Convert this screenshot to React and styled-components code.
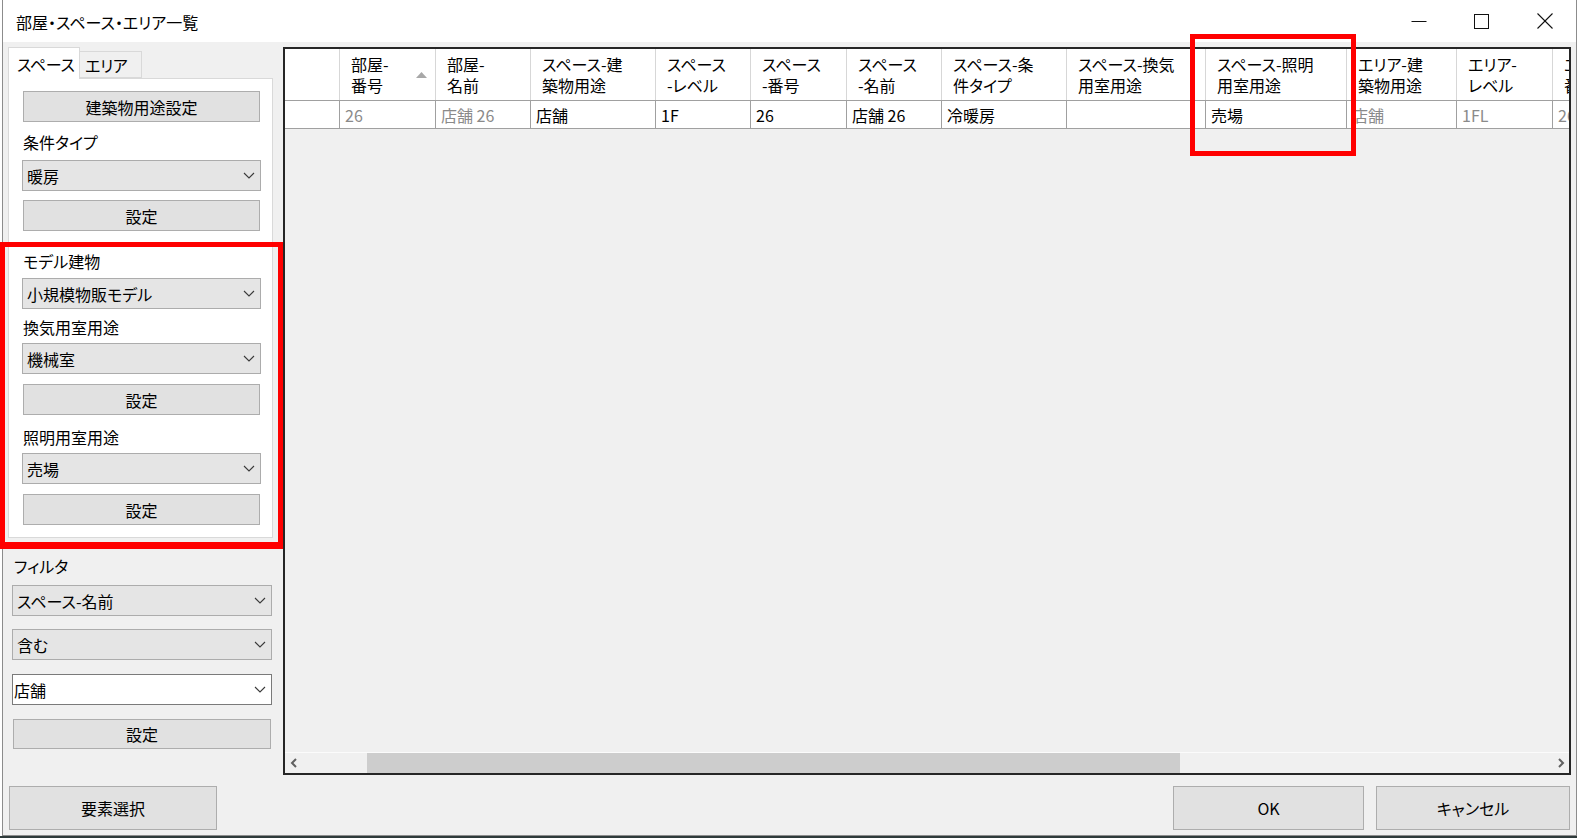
import React from 'react';
import styled, { createGlobalStyle } from 'styled-components';

const GlobalStyle = createGlobalStyle`
  html, body {
    margin: 0;
    padding: 0;
    background: #fff;
  }
  body {
    font-family: "Noto Sans CJK JP", "Noto Sans", sans-serif;
    font-size: 16px;
    color: #000;
    font-feature-settings: "palt";
  }
  * {
    box-sizing: border-box;
  }
`;

const Screen = styled.div`
  position: relative;
  width: 1577px;
  height: 838px;
  overflow: hidden;
  background: #fff;
`;

const Window = styled.div`
  margin-left: 2px;
  width: 1575px;
  height: 836px;
  border: 1px solid #8c8c8c;
  border-top: 0;
  display: flex;
  flex-direction: column;
`;

const Taskbar = styled.div`
  height: 2px;
  background: #2e3a3a;
`;

const TitleBar = styled.div`
  height: 42px;
  flex-shrink: 0;
  background: #fff;
  display: flex;
  align-items: center;
  padding-left: 13px;
`;

const Title = styled.div`
  font-size: 16px;
  padding-top: 2px;
`;

const WinControls = styled.div`
  margin-left: auto;
  display: flex;
  height: 100%;
`;

const WinButton = styled.div`
  width: 63px;
  height: 100%;
  display: flex;
  align-items: center;
  justify-content: center;
`;

const Client = styled.div`
  flex: 1;
  background: #f0f0f0;
  padding: 5px;
  display: flex;
  flex-direction: column;
`;

const Main = styled.div`
  display: flex;
  gap: 10px;
  height: 728px;
  flex-shrink: 0;
`;

const LeftPane = styled.div`
  width: 265px;
  flex-shrink: 0;
  display: flex;
  flex-direction: column;
`;

const TabStrip = styled.div`
  position: relative;
  z-index: 1;
  display: flex;
  align-items: flex-end;
  height: 31px;
`;

const Tab = styled.div`
  width: ${p => p.$w}px;
  height: ${p => (p.$active ? 32 : 27)}px;
  margin-bottom: ${p => (p.$active ? -1 : 0)}px;
  padding-left: ${p => p.$pad}px;
  background: ${p => (p.$active ? '#fff' : '#f0f0f0')};
  border: 1px solid #d9d9d9;
  border-bottom: ${p => (p.$active ? 'none' : '1px solid #d9d9d9')};
  border-left: ${p => (p.$active ? '1px solid #d9d9d9' : 'none')};
  display: flex;
  align-items: center;
  font-size: 16px;
  letter-spacing: -0.3px;
  white-space: nowrap;
`;

const TabPage = styled.div`
  height: 460px;
  background: #fff;
  border: 1px solid #d9d9d9;
  padding: 12px 11px 0 13px;
  display: flex;
  flex-direction: column;
`;

const FilterGroup = styled.div`
  display: flex;
  flex-direction: column;
  padding: 0 1px 0 4px;
`;

const Label = styled.div`
  height: 22px;
  line-height: 22px;
  margin-top: ${p => p.$mt || 0}px;
  padding-left: ${p => p.$indent || 1}px;
  font-size: 16px;
  white-space: nowrap;
`;

const Combo = styled.div`
  height: 31px;
  flex-shrink: 0;
  margin-top: ${p => p.$mt || 0}px;
  background: ${p => (p.$editable ? '#fff' : '#e5e5e5')};
  border: 1px solid ${p => (p.$editable ? '#7a7a7a' : '#acacac')};
  padding: 0 5px 0 ${p => (p.$editable ? 1 : 4)}px;
  display: flex;
  align-items: center;
  font-size: 16px;
  white-space: nowrap;
`;

const ComboText = styled.span`
  flex: 1;
`;

const Button = styled.div`
  height: ${p => p.$h || 31}px;
  flex-shrink: 0;
  width: ${p => (p.$w ? `${p.$w}px` : 'auto')};
  margin: ${p => p.$mt || 0}px ${p => p.$mr ?? 1}px 0 ${p => p.$ml ?? 1}px;
  background: #e1e1e1;
  border: 1px solid #adadad;
  display: flex;
  align-items: center;
  justify-content: center;
  font-size: 16px;
  white-space: nowrap;
`;

const Grid = styled.div`
  width: 1288px;
  height: 728px;
  flex-shrink: 0;
  border: 2px solid #262626;
  background: #f0f0f0;
  display: flex;
  flex-direction: column;
  overflow: hidden;
`;

const HeaderRow = styled.div`
  display: flex;
  height: 52px;
  flex-shrink: 0;
  background: #fff;
  border-bottom: 1px solid #a0a0a0;
`;

const HeaderCell = styled.div`
  width: ${p => p.$w}px;
  flex-shrink: 0;
  border-right: 1px solid #d7d7d7;
  padding-left: 11px;
  display: flex;
  align-items: center;
  line-height: 21px;
  font-size: 16px;
  white-space: nowrap;
`;

const SortMark = styled.svg`
  margin-left: auto;
  margin-right: 8px;
`;

const DataRow = styled.div`
  display: flex;
  height: 28px;
  flex-shrink: 0;
`;

const DataCell = styled.div`
  width: ${p => p.$w}px;
  flex-shrink: 0;
  background: #fff;
  border-right: 1px solid #a0a0a0;
  border-bottom: 1px solid #a0a0a0;
  padding-left: 5px;
  display: flex;
  align-items: center;
  font-size: 16px;
  color: ${p => (p.$dim ? '#8a8a8a' : '#000')};
  white-space: nowrap;
`;

const EmptyArea = styled.div`
  flex: 1;
`;

const ScrollBar = styled.div`
  height: 21px;
  flex-shrink: 0;
  display: flex;
  background: #f0f0f0;
  border-top: 1px solid #fbfbfb;
`;

const ScrollArrow = styled.div`
  width: 17px;
  flex-shrink: 0;
  display: flex;
  align-items: center;
  justify-content: center;
`;

const ScrollTrack = styled.div`
  flex: 1;
  display: flex;
`;

const ScrollThumb = styled.div`
  margin-left: ${p => p.$offset}px;
  width: ${p => p.$size}px;
  background: #cdcdcd;
`;

const BottomBar = styled.div`
  display: flex;
  height: 44px;
  margin-top: 11px;
  flex-shrink: 0;
`;

const Callout = styled.div`
  position: absolute;
  left: ${p => p.$x}px;
  top: ${p => p.$y}px;
  width: ${p => p.$w}px;
  height: ${p => p.$h}px;
  border: 5px solid #ff0000;
  border-bottom-width: ${p => p.$bottom || 5}px;
  pointer-events: none;
`;

const Chevron = () => (
  <svg width="12" height="7" viewBox="0 0 12 7">
    <polyline points="1,1 6,6 11,1" fill="none" stroke="#3a3a3a" strokeWidth="1.1" />
  </svg>
);

const Arrow = ({ dir }) => (
  <svg width="8" height="10" viewBox="0 0 8 10">
    <polyline
      points={dir === 'left' ? '6,1 2,5 6,9' : '2,1 6,5 2,9'}
      fill="none"
      stroke="#606060"
      strokeWidth="2"
    />
  </svg>
);

const Select = ({ value, mt, editable }) => (
  <Combo $mt={mt} $editable={editable}>
    <ComboText>{value}</ComboText>
    <Chevron />
  </Combo>
);

const columns = [
  { w: 96, head: ['部屋-', '番号'], value: '26', dim: true, sorted: true },
  { w: 95, head: ['部屋-', '名前'], value: '店舗 26', dim: true },
  { w: 125, head: ['スペース-建', '築物用途'], value: '店舗' },
  { w: 95, head: ['スペース', '-レベル'], value: '1F' },
  { w: 96, head: ['スペース', '-番号'], value: '26' },
  { w: 95, head: ['スペース', '-名前'], value: '店舗 26' },
  { w: 125, head: ['スペース-条', '件タイプ'], value: '冷暖房' },
  { w: 139, head: ['スペース-換気', '用室用途'], value: '' },
  { w: 141, head: ['スペース-照明', '用室用途'], value: '売場' },
  { w: 110, head: ['エリア-建', '築物用途'], value: '店舗', dim: true },
  { w: 96, head: ['エリア-', 'レベル'], value: '1FL', dim: true },
  { w: 96, head: ['エリア-', '番号'], value: '26', dim: true },
];

export default function App() {
  return (
    <Screen>
      <GlobalStyle />
      <Window>
        <TitleBar>
          <Title>部屋・スペース・エリア一覧</Title>
          <WinControls>
            <WinButton>
              <svg width="16" height="16" viewBox="0 0 16 16">
                <line x1="0.5" y1="8.5" x2="15.5" y2="8.5" stroke="#111" strokeWidth="1" />
              </svg>
            </WinButton>
            <WinButton>
              <svg width="15" height="15" viewBox="0 0 15 15">
                <rect x="0.5" y="0.5" width="14" height="14" fill="none" stroke="#111" strokeWidth="1" />
              </svg>
            </WinButton>
            <WinButton>
              <svg width="16" height="16" viewBox="0 0 16 16">
                <line x1="0.5" y1="0.5" x2="15.5" y2="15.5" stroke="#111" strokeWidth="1.1" />
                <line x1="15.5" y1="0.5" x2="0.5" y2="15.5" stroke="#111" strokeWidth="1.1" />
              </svg>
            </WinButton>
          </WinControls>
        </TitleBar>

        <Client>
          <Main>
            <LeftPane>
              <TabStrip>
                <Tab $active $w={72} $pad={8}>スペース</Tab>
                <Tab $w={62} $pad={5}>エリア</Tab>
              </TabStrip>
              <TabPage>
                <Button>建築物用途設定</Button>
                <Label $mt={9}>条件タイプ</Label>
                <Select mt={7} value="暖房" />
                <Button $mt={9}>設定</Button>

                <Label $mt={19}>モデル建物</Label>
                <Select mt={6} value="小規模物販モデル" />
                <Label $mt={7}>換気用室用途</Label>
                <Select mt={5} value="機械室" />
                <Button $mt={10}>設定</Button>
                <Label $mt={11}>照明用室用途</Label>
                <Select mt={5} value="売場" />
                <Button $mt={10}>設定</Button>
              </TabPage>

              <FilterGroup>
                <Label $mt={17} $indent={2}>フィルタ</Label>
                <Select mt={8} value="スペース-名前" />
                <Select mt={13} value="含む" />
                <Select mt={14} value="店舗" editable />
                <Button $mt={14} $h={30}>設定</Button>
              </FilterGroup>
            </LeftPane>

            <Grid>
              <HeaderRow>
                <HeaderCell $w={55} />
                {columns.map(col => (
                  <HeaderCell key={col.head.join('')} $w={col.w}>
                    <div>
                      {col.head[0]}
                      <br />
                      {col.head[1]}
                    </div>
                    {col.sorted && (
                      <SortMark width="11" height="6" viewBox="0 0 11 6">
                        <polygon points="0,6 5.5,0 11,6" fill="#a8a8a8" />
                      </SortMark>
                    )}
                  </HeaderCell>
                ))}
              </HeaderRow>
              <DataRow>
                <DataCell $w={55} />
                {columns.map(col => (
                  <DataCell key={col.head.join('')} $w={col.w} $dim={col.dim}>
                    {col.value}
                  </DataCell>
                ))}
              </DataRow>
              <EmptyArea />
              <ScrollBar>
                <ScrollArrow>
                  <Arrow dir="left" />
                </ScrollArrow>
                <ScrollTrack>
                  <ScrollThumb $offset={65} $size={813} />
                </ScrollTrack>
                <ScrollArrow>
                  <Arrow dir="right" />
                </ScrollArrow>
              </ScrollBar>
            </Grid>
          </Main>

          <BottomBar>
            <Button $h={44} $w={208} $ml={1}>要素選択</Button>
            <Button $h={44} $w={191} $ml={955} $mr={0}>OK</Button>
            <Button $h={44} $w={194} $ml={12} $mr={2}>キャンセル</Button>
          </BottomBar>
        </Client>
      </Window>
      <Taskbar />

      <Callout $x={0} $y={242} $w={283} $h={307} $bottom={7} />
      <Callout $x={1190} $y={34} $w={166} $h={122} />
    </Screen>
  );
}
